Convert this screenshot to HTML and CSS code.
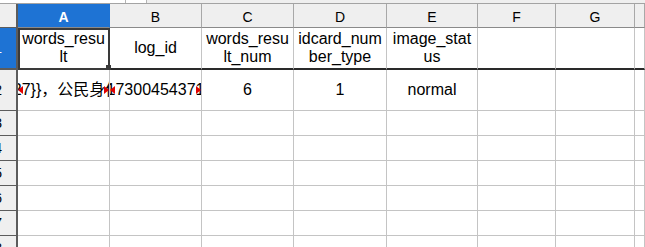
FILE: index.html
```html
<!DOCTYPE html>
<html lang="zh">
<head>
    <meta charset="UTF-8">
    <meta name="viewport" content="width=device-width, initial-scale=1.0">
    <title>Sheet1</title>
    <link rel="stylesheet" href="styles.css">
</head>
<body>

    <!-- scroll strip above the grid -->
    <div class="topbar">
        <div class="track"></div>
        <div class="thumb"></div>
    </div>

    <div class="sheet">
        <!-- column headers -->
        <div class="row head">
            <div class="cell corner"></div>
            <div class="cell sel">A</div>
            <div class="cell">B</div>
            <div class="cell">C</div>
            <div class="cell">D</div>
            <div class="cell">E</div>
            <div class="cell">F</div>
            <div class="cell">G</div>
            <div class="cell"></div>
        </div>

        <div class="row r1">
            <div class="cell rh sel">1</div>
            <div class="cell active">words_resu<br>lt</div>
            <div class="cell">log_id</div>
            <div class="cell">words_resu<br>lt_num</div>
            <div class="cell">idcard_num<br>ber_type</div>
            <div class="cell">image_stat<br>us</div>
            <div class="cell"></div>
            <div class="cell"></div>
            <div class="cell"></div>
        </div>

        <div class="row r2">
            <div class="cell rh">2</div>
            <div class="cell clipped">
                <span class="inner"><span class="pre">2</span>7}}，公民身<span class="post">份号码</span></span>
                <i class="mark left"></i><i class="mark right"></i>
            </div>
            <div class="cell clipped">
                <span class="inner"><span class="pre">1</span>730045437<span class="post">12</span></span>
                <i class="mark left"></i><i class="mark right"></i>
            </div>
            <div class="cell">6</div>
            <div class="cell">1</div>
            <div class="cell">normal</div>
            <div class="cell"></div>
            <div class="cell"></div>
            <div class="cell"></div>
        </div>

        <div class="row">
            <div class="cell rh">3</div>
            <div class="cell"></div><div class="cell"></div><div class="cell"></div><div class="cell"></div>
            <div class="cell"></div><div class="cell"></div><div class="cell"></div><div class="cell"></div>
        </div>
        <div class="row">
            <div class="cell rh">4</div>
            <div class="cell"></div><div class="cell"></div><div class="cell"></div><div class="cell"></div>
            <div class="cell"></div><div class="cell"></div><div class="cell"></div><div class="cell"></div>
        </div>
        <div class="row">
            <div class="cell rh">5</div>
            <div class="cell"></div><div class="cell"></div><div class="cell"></div><div class="cell"></div>
            <div class="cell"></div><div class="cell"></div><div class="cell"></div><div class="cell"></div>
        </div>
        <div class="row">
            <div class="cell rh">6</div>
            <div class="cell"></div><div class="cell"></div><div class="cell"></div><div class="cell"></div>
            <div class="cell"></div><div class="cell"></div><div class="cell"></div><div class="cell"></div>
        </div>
        <div class="row">
            <div class="cell rh">7</div>
            <div class="cell"></div><div class="cell"></div><div class="cell"></div><div class="cell"></div>
            <div class="cell"></div><div class="cell"></div><div class="cell"></div><div class="cell"></div>
        </div>
        <div class="row">
            <div class="cell rh">8</div>
            <div class="cell"></div><div class="cell"></div><div class="cell"></div><div class="cell"></div>
            <div class="cell"></div><div class="cell"></div><div class="cell"></div><div class="cell"></div>
        </div>
    </div>

</body>
</html>
```

FILE: styles.css
```css
* { margin: 0; padding: 0; box-sizing: border-box; }
body {
    width: 645px;
    height: 247px;
    overflow: hidden;
    background: #fff;
    color: #000;
    font-family: "Liberation Sans", Arial, "Noto Sans CJK SC", sans-serif;
}

/* Scroll strip */
.topbar { display: flex; height: 4px; background: #efefef; border-bottom: 1px solid #a3a3a3; }
.topbar .track { width: 125px; background: #fff; }
.topbar .thumb { width: 22px; background: #fff; border-left: 1px solid #b4b4b4; border-right: 1px solid #b4b4b4; }

/* Grid */
.row {
    display: grid;
    grid-template-columns: 18px 92px 92px 92px 93px 91px 78px 79px 1fr;
    height: 25px;
}
.cell {
    position: relative;
    display: flex;
    align-items: center;
    justify-content: center;
    text-align: center;
    font-size: 16px;
    line-height: 18px;
    white-space: nowrap;
    overflow: hidden;
    border-right: 1px solid #c4c4c4;
    border-bottom: 1px solid #c4c4c4;
}

/* Column headers */
.head { height: 24px; }
.head .cell {
    background: #efefef;
    font-size: 14px;
    padding-top: 2px;
    border-right-color: #a8a8a8;
    border-bottom-color: #8a8a8a;
}
.head .corner { border-right: 2px solid #5c5c5c; border-bottom-color: #5c5c5c; }
.head .sel { background: #1e73d4; color: #fff; font-weight: bold; border-right-color: #1e73d4; }

/* Row headers */
.rh {
    background: #efefef;
    font-size: 14px;
    justify-content: flex-end;
    padding-right: 14px;
    border-right: 2px solid #5c5c5c;
    border-bottom-color: #5c5c5c;
}
.rh.sel { background: #1e73d4; color: #fff; }

.r1 { height: 42px; }
.r1 .cell { border-bottom: 2px solid #2a2a2a; }
.r1 .rh { border-bottom-color: #5c5c5c; }
.r2 { height: 41px; }

/* Cursor on A1 */
.cell.active { overflow: visible; z-index: 1; }
.cell.active::after {
    content: "";
    position: absolute;
    top: 0;
    left: 0;
    right: -1px;
    bottom: -2px;
    border: 2px solid #3a3a3a;
}
.cell.active::before {
    content: "";
    position: absolute;
    right: -2px;
    bottom: -2px;
    width: 5px;
    height: 5px;
    background: #3a3a3a;
}

/* Text cut at both sides */
.clipped .inner { flex-shrink: 0; white-space: nowrap; }
.clipped .pre,
.clipped .post { display: inline-block; vertical-align: top; width: 30px; overflow: hidden; }
.clipped .pre { text-align: right; }
.clipped .post { text-align: left; }

.mark {
    position: absolute;
    top: 50%;
    width: 0;
    height: 0;
    margin-top: -4px;
    border-top: 4px solid transparent;
    border-bottom: 4px solid transparent;
}
.mark.left { left: 0; border-right: 5px solid #e00000; }
.mark.right { right: 0; border-left: 5px solid #e00000; }
```
